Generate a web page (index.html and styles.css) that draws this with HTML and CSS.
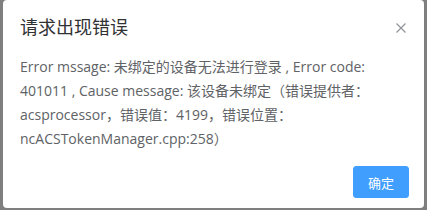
FILE: index.html
```html
<!DOCTYPE html>
<html lang="zh-CN">

<head>
    <meta charset="UTF-8">
    <meta name="viewport" content="width=device-width, initial-scale=1.0">
    <title>请求出现错误</title>
    <link rel="stylesheet" href="styles.css">
</head>

<body>

    <div class="dialog">
        <div class="dialog-header">
            <span class="dialog-title">请求出现错误</span>
            <button class="dialog-close" aria-label="Close">
                <svg width="10" height="10" viewBox="0 0 10 10">
                    <path d="M0.5 0.5 L9.5 9.5 M9.5 0.5 L0.5 9.5" stroke="#909399" stroke-width="1.2" fill="none" />
                </svg>
            </button>
        </div>

        <div class="dialog-body">
            Error mssage: 未绑定的设备无法进行登录 , Error code: 401011 , Cause message: 该设备未绑定（错误提供者：acsprocessor，错误值：4199，错误位置：ncACSTokenManager.cpp:258）
        </div>

        <div class="dialog-footer">
            <button class="btn-primary">确定</button>
        </div>
    </div>

</body>
</html>
```

FILE: styles.css
```css
body {
    font-family: "Open Sans", "Noto Sans CJK SC", sans-serif;
    background-color: #7f7f7f;
    margin: 0;
    padding: 0 3px;
    height: 210px;
    overflow: hidden;
}

.dialog {
    background: white;
    border-radius: 4px;
    width: 421px;
    height: 208px;
    box-sizing: border-box;
}

.dialog-header {
    display: flex;
    justify-content: space-between;
    align-items: center;
    padding: 15px 18px 0 17px;
    height: 24px;
}

.dialog-title {
    font-size: 18px;
    line-height: 24px;
    color: #303133;
}

.dialog-close {
    border: none;
    background: none;
    padding: 0;
    cursor: pointer;
    display: flex;
    margin-top: 2px;
}

.dialog-body {
    padding: 16px 20px 0 17px;
    font-size: 14px;
    line-height: 24px;
    color: #606266;
    height: 96px;
}

.dialog-footer {
    display: flex;
    justify-content: flex-end;
    padding: 15px 15px 0 0;
}

.btn-primary {
    width: 56px;
    height: 32px;
    background-color: #409eff;
    border: 1px solid #409eff;
    border-radius: 3px;
    color: white;
    font-family: "Noto Sans CJK SC", sans-serif;
    font-size: 13px;
    cursor: pointer;
}
```
